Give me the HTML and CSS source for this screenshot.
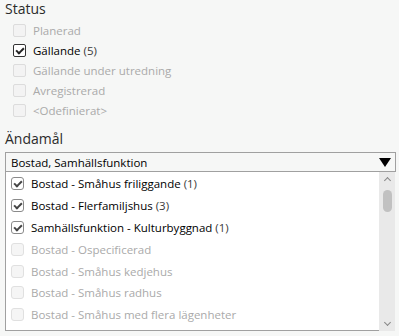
FILE: index.html
```html
<!DOCTYPE html>
<html lang="sv">
<head>
    <meta charset="UTF-8">
    <meta name="viewport" content="width=device-width, initial-scale=1.0">
    <title>Filter</title>
    <link rel="stylesheet" href="styles.css">
</head>
<body>
    <div class="panel">
        <div class="section-title">Status</div>
        <div class="status-list">
            <div class="row disabled"><span class="box"></span><span>Planerad</span></div>
            <div class="row"><span class="box checked"></span><span>Gällande <span class="count">(5)</span></span></div>
            <div class="row disabled"><span class="box"></span><span>Gällande under utredning</span></div>
            <div class="row disabled"><span class="box"></span><span>Avregistrerad</span></div>
            <div class="row disabled"><span class="box"></span><span>&lt;Odefinierat&gt;</span></div>
        </div>

        <div class="section-title purpose">Ändamål</div>
        <div class="combo">
            <span class="combo-text">Bostad, Samhällsfunktion</span>
            <span class="combo-arrow"></span>
        </div>
        <div class="dropdown">
            <div class="items">
                <div class="item"><span class="box checked"></span><span>Bostad - Småhus friliggande <span class="count">(1)</span></span></div>
                <div class="item"><span class="box checked"></span><span>Bostad - Flerfamiljshus <span class="count">(3)</span></span></div>
                <div class="item"><span class="box checked"></span><span>Samhällsfunktion - Kulturbyggnad <span class="count">(1)</span></span></div>
                <div class="item disabled"><span class="box"></span><span>Bostad - Ospecificerad</span></div>
                <div class="item disabled"><span class="box"></span><span>Bostad - Småhus kedjehus</span></div>
                <div class="item disabled"><span class="box"></span><span>Bostad - Småhus radhus</span></div>
                <div class="item disabled"><span class="box"></span><span>Bostad - Småhus med flera lägenheter</span></div>
            </div>
            <div class="scrollbar">
                <span class="arrow up"></span>
                <span class="thumb"></span>
                <span class="arrow down"></span>
            </div>
        </div>
    </div>
</body>
</html>
```

FILE: styles.css
```css
body, html {
    margin: 0;
    padding: 0;
    background-color: #f6f7f6;
    font-family: "Open Sans", "Noto Sans", sans-serif;
    color: #000;
}
.panel {
    padding: 0 3px 0 5px;
}
.section-title {
    font-size: 14px;
    line-height: 18px;
    color: #2b2b2b;
    height: 18px;
}
.section-title.purpose {
    margin-top: 10px;
}
.status-list {
    padding-top: 2px;
    padding-left: 8px;
}
.row, .item {
    display: flex;
    align-items: center;
    font-size: 11.5px;
    white-space: nowrap;
}
.row {
    height: 20px;
    gap: 7px;
}
.count {
    color: #3a3a3a;
}
.disabled {
    color: #aaaaaa;
}
.disabled .count {
    color: #aaaaaa;
}
.box {
    width: 11px;
    height: 11px;
    border: 1px solid #333;
    border-radius: 2px;
    background-color: #fff;
    flex: none;
    position: relative;
}
.disabled .box {
    border-color: #dcdcdc;
    background-color: #f3f3f3;
}
.box.checked::after {
    content: "";
    position: absolute;
    left: 2px;
    top: 1px;
    width: 6px;
    height: 3px;
    border-left: 2px solid #222;
    border-bottom: 2px solid #222;
    transform: translate(0, 1.5px) rotate(-45deg);
}
.combo {
    margin-top: 4px;
    height: 18px;
    border: 1px solid #a0a0a0;
    background-color: #f6f7f6;
    display: flex;
    align-items: center;
    justify-content: space-between;
    padding: 0 4px 0 5px;
    font-size: 11.5px;
}
.combo-arrow {
    width: 0;
    height: 0;
    border-left: 6.5px solid transparent;
    border-right: 6.5px solid transparent;
    border-top: 9px solid #000;
}
.dropdown {
    display: flex;
    height: 159px;
    margin-right: 1px;
}
.items {
    flex: 1;
    background-color: #fff;
    border-left: 1px solid #a0a0a0;
    border-bottom: 1px solid #a0a0a0;
    overflow: hidden;
    padding-top: 1px;
}
.item {
    height: 21.8px;
    gap: 7px;
    padding-left: 5px;
}
.item .box {
    border-color: #8a8a8a;
    border-radius: 3px;
}
.item .box.checked::after {
    border-color: #444;
}
.item.disabled .box {
    border-color: #e0e0e0;
    background-color: #f5f5f5;
}
.scrollbar {
    width: 16px;
    height: 161px;
    background-color: #e9e9e9;
    display: flex;
    flex-direction: column;
    align-items: center;
}
.thumb {
    width: 9px;
    height: 22px;
    border-radius: 5px;
    background-color: #c1c1c1;
    margin-top: 7px;
}
.arrow {
    width: 4px;
    height: 4px;
    border-left: 1px solid #888;
    border-top: 1px solid #888;
}
.arrow.up {
    margin-top: 6px;
    transform: rotate(45deg);
}
.arrow.down {
    margin-top: auto;
    margin-bottom: 8px;
    transform: rotate(-135deg);
}
```
